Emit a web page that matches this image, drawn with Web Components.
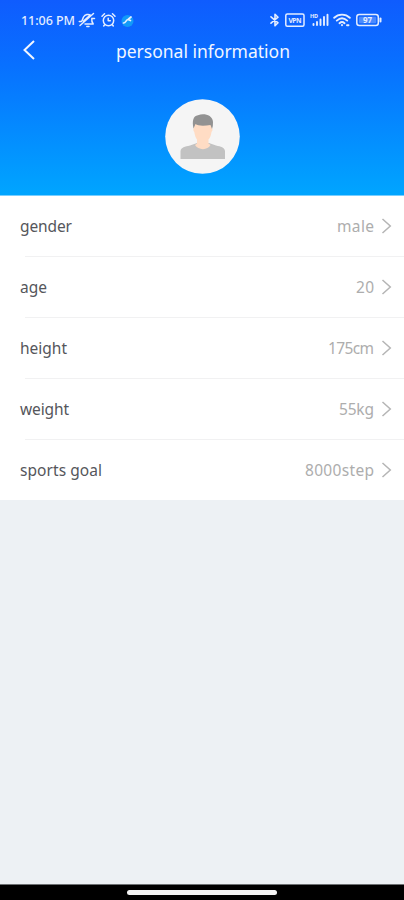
<!DOCTYPE html>
<html lang="en">
<head>
<meta charset="utf-8">
<title>personal information</title>
<style>
html, body { margin: 0; height: 100%; }
body { font-family: "Noto Sans", "Open Sans", sans-serif; overflow: hidden; }
</style>
</head>
<body>
<profile-screen></profile-screen>
<script>
const define = (name, html, ready) => customElements.define(name, class extends HTMLElement {
  constructor() {
    super();
    const t = document.createElement('template');
    t.innerHTML = html;
    this.attachShadow({ mode: 'open' }).append(t.content.cloneNode(true));
  }
  connectedCallback() { if (ready) ready(this); }
});

define('status-bar', `
<style>
:host { display: flex; height: 32px; box-sizing: border-box; padding: 8px 21px 0 21px; color: #e4edff; align-items: center; }
fit-text { font-size: 12.5px; font-weight: 500; width: 55px; padding-top: 1px; }
svg { display: block; fill: none; stroke: currentColor; flex: none; stroke-linecap: round; stroke-linejoin: round; }
.space { flex: 1; }
text { font-family: "Noto Sans", sans-serif; font-weight: 700; fill: currentColor; stroke: none; }
</style>
<fit-text width="54">11:06 PM</fit-text>
<svg style="margin-left:2px" width="18" height="16" viewBox="0 0 18 16" stroke-width="1.5"><path d="M3.500 9.500C4.500 8.500 4.500 7 5.500 5C7 2.300 10.500 1.800 12.500 3.200M13.800 6.500C13.500 9 14 10.500 15.200 12H7M8.800 14.500H11M2 13.500L15.500 1.500M1.300 9.500H3.500M5.500 9L12 3.200M14 6.500H16.500"/></svg>
<svg style="margin-left:5px" width="15" height="16" viewBox="0 0 15 16" stroke-width="1.5"><circle cx="7.500" cy="8.500" r="5.200"/><path d="M1 4.200L3.500 1.800M14 4.200L11.500 1.800M7.200 6.300V8.800H9.300M3.700 12.700L2.700 14M11.300 12.700L12.300 14"/></svg>
<svg style="margin-left:5px" width="13" height="16" viewBox="0 0 13 16"><circle cx="6.500" cy="9" r="6" fill="#129af8" stroke="none"/><path d="M2.500 11C5 11 5 7.500 7 7.500L10 5M7 7.500L9.500 8.500" stroke-width="1.700"/></svg>
<span class="space"></span>
<svg width="10" height="16" viewBox="0 0 10 16" stroke-width="1.600"><path d="M1 4.800L8 10.800L5 13.800V2.200L8 5.200L1 11.200"/></svg>
<svg style="margin-left:5px" width="20" height="16" viewBox="0 0 20 16" stroke-width="1.500"><rect x=".8" y="2" width="18.200" height="12.200" rx="1.500"/><text x="10" y="10.700" font-size="6.800" text-anchor="middle" textLength="13">VPN</text></svg>
<svg style="margin-left:5px" width="19" height="16" viewBox="0 0 19 16" stroke-width="1.900"><path d="M3.500 13V12M7 13V10M10.500 13V7.500M14 13V5M17.500 13V2.800"/><text x="0" y="5.800" font-size="5.500" textLength="8">HD</text></svg>
<svg style="margin-left:4px" width="18" height="16" viewBox="0 0 18 16" stroke-width="1.900"><path d="M1.200 5.800C5.500 1.600 12.500 1.600 16.800 5.800M3.800 8.600C7 5.700 11 5.700 14.200 8.600M6.500 11.200C8 9.800 10 9.800 11.500 11.200M9 13V13.200M14 13.200H15.500"/></svg>
<svg style="margin-left:5px;margin-right:1px" width="26" height="16" viewBox="0 0 26 16" stroke-width="1.500"><rect x=".8" y="2.500" width="21.500" height="11" rx="2.500"/><path d="M24.500 6.500V9.500" stroke-width="2"/><rect x="3" y="4.700" width="17.200" height="6.600" rx="1" fill="#a9c8ff" stroke="none" opacity=".4"/><text x="11.600" y="11" font-size="8" text-anchor="middle">97</text></svg>
`);

define('title-bar', `
<style>
:host { display: grid; grid-template-columns: 116px 1fr; height: 36px; align-items: center; color: #f1f6ff; font-size: 17.5px; }
svg { margin-left: 22px; display: block; }
.title { padding-top: 2px; }
</style>
<svg width="14" height="20" viewBox="0 0 14 20" fill="none" stroke="currentColor" stroke-width="2"><path d="M12 1L2.500 10L12 19"/></svg>
<div class="title"><slot></slot></div>`);

define('user-avatar', `
<style>:host { display: block; width: 75px; height: 75px; } svg { display: block; }</style>
<svg width="75" height="75" viewBox="0 0 75 75">
<circle cx="37.500" cy="37.500" r="37.300" fill="#f5f5f5"/>
<path d="M15.500 60V52C16 48.500 20 47.500 25 46.500L32 44H44L51 46.500C56 47.500 59.500 48.500 60 52V60Z" fill="#c2c2c2"/>
<path d="M29 23H47V29Q48.500 31 46.500 33C46 37 44.500 39.500 43.500 40.500V44.500L45.500 46C43 51.500 33 51.500 30 46L32 44.500V40.500C30.500 38.500 29.800 36 29.300 33Q27.500 31 29 28Z" fill="#ffdcc4"/>
<path d="M28.500 29.500C27 22 28 17 33 16.200C39 14 47.500 16 48 23Q48.200 27 47 30L45.500 26C39 27 33 27 30.500 25Z" fill="#929292"/>
</svg>`);

define('info-row', `
<style>
:host { display: flex; height: 61px; box-sizing: border-box; padding: 0 12px 1px 20px; align-items: center; position: relative; background: #fff; font-size: 15.5px; }
:host([last]) { height: 60px; padding-bottom: 0; }
.label, .value { padding-top: 1px; }
.label { color: #55565b; flex: 1; }
.value { color: #adadad; }
svg { display: block; margin: 0 0 1px 7px; }
:host(:not([last]))::after { content: ""; position: absolute; left: 25px; right: 0; bottom: 0; height: 1px; background: #f1f1f2; }
</style>
<div class="label"><slot name="label"></slot></div>
<div class="value"><slot name="value"></slot></div>
<svg width="11" height="16" viewBox="0 0 11 16" fill="none" stroke="#b5b5b5" stroke-width="1.500"><path d="M1.500 1L9.300 8L1.500 15"/></svg>`);

define('home-indicator', `
<style>
:host { display: flex; height: 16px; background: #000; border-top: 1px solid #6d7072; box-sizing: border-box; justify-content: center; align-items: center; }
i { width: 150px; height: 5px; border-radius: 3px; background: #f4f4f4; }
</style><i></i>`);

define('profile-screen', `
<style>
:host { display: flex; flex-direction: column; height: 100vh; background: #edf1f4; }
header { height: 196px; background: linear-gradient(#0f5cfe 0, #0870ff 33%, #00a5ff 100%); border-bottom: 1px solid #78ceff; box-sizing: border-box; flex: none; }
user-avatar { margin: 31px auto 0 165px; }
main { flex: 1; }
</style>
<header><status-bar></status-bar><title-bar><fit-text width="174">personal information</fit-text></title-bar><user-avatar></user-avatar></header>
<main>
<info-row><fit-text slot="label" width="52">gender</fit-text><fit-text slot="value" width="37">male</fit-text></info-row>
<info-row><fit-text slot="label" width="27">age</fit-text><fit-text slot="value" width="18">20</fit-text></info-row>
<info-row><fit-text slot="label" width="47">height</fit-text><fit-text slot="value" width="46">175cm</fit-text></info-row>
<info-row><fit-text slot="label" width="49">weight</fit-text><fit-text slot="value" width="35">55kg</fit-text></info-row>
<info-row last><fit-text slot="label" width="82">sports goal</fit-text><fit-text slot="value" width="69">8000step</fit-text></info-row>
</main>
<home-indicator></home-indicator>`);

// A single line of text tracked to an exact width; registered last, once its surroundings are styled.
define('fit-text', `
<style>
:host { display: block; white-space: nowrap; line-height: 1.4; }
span { display: inline-block; }
</style><span><slot></slot></span>`, el => {
  const span = el.shadowRoot.querySelector('span');
  const target = Number(el.getAttribute('width'));
  const gap = (target - span.getBoundingClientRect().width) / (el.textContent.length - 1);
  span.style.letterSpacing = gap + 'px';
  span.style.marginRight = -gap + 'px';
});
</script>
</body>
</html>
